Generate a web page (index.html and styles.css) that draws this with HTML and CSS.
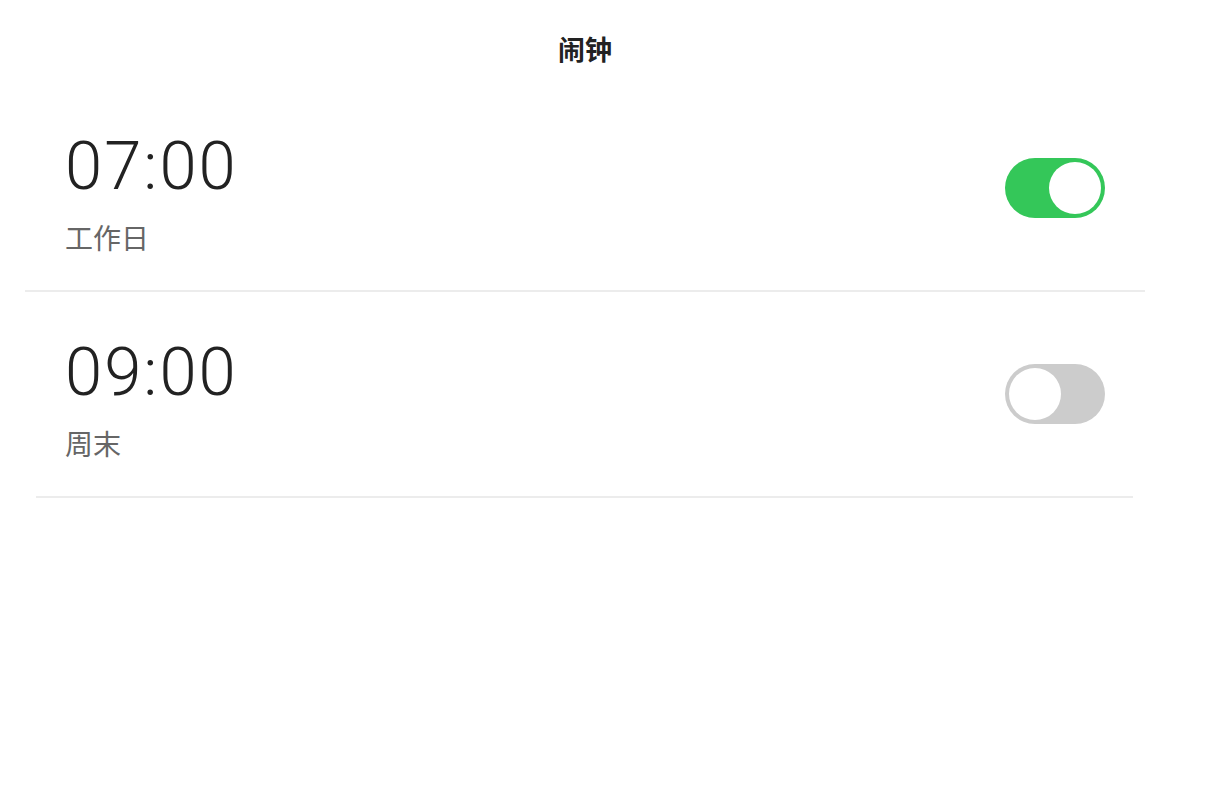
FILE: index.html
```html
<!DOCTYPE html>
<html lang="zh">
<head>
<meta charset="utf-8">
<title>闹钟</title>
<link rel="stylesheet" href="styles.css">
</head>
<body>
<div class="page">
  <header class="header"><h1 class="title">闹钟</h1></header>
  <ul class="alarms">
    <li class="alarm alarm-first">
      <div class="info">
        <div class="time">07:00</div>
        <div class="label">工作日</div>
      </div>
      <span class="switch switch-on"><span class="knob"></span></span>
    </li>
    <li class="alarm alarm-second">
      <div class="info">
        <div class="time">09:00</div>
        <div class="label">周末</div>
      </div>
      <span class="switch switch-off"><span class="knob"></span></span>
    </li>
  </ul>
</div>
</body>
</html>
```

FILE: styles.css
```css
html, body {
  margin: 0;
  padding: 0;
  background: #ffffff;
}
body {
  font-family: "Roboto", "Noto Sans CJK SC", sans-serif;
  color: #222222;
}
.page {
  width: 1170px;
}
.header {
  height: 86px;
  display: flex;
  justify-content: center;
  align-items: flex-start;
  box-sizing: border-box;
  padding-top: 35px;
}
.title {
  margin: 0;
  font-family: "Noto Sans CJK SC", sans-serif;
  font-size: 27px;
  line-height: 28px;
  font-weight: 700;
  color: #222222;
}
.alarms {
  list-style: none;
  margin: 0;
  padding: 0;
}
.alarm {
  display: flex;
  align-items: center;
  justify-content: space-between;
  height: 206px;
  box-sizing: border-box;
  border-bottom: 2px solid #ececec;
}
.alarm-first {
  margin: 0 25px;
  padding: 0 40px 0 40px;
}
.alarm-second {
  margin: 0 37px 0 36px;
  padding: 0 28px 0 29px;
}
.info {
  display: flex;
  flex-direction: column;
  padding-top: 14px;
}
.time {
  font-family: "Roboto", sans-serif;
  font-weight: 300;
  font-size: 67px;
  line-height: 67px;
  letter-spacing: 2px;
  color: #222222;
}
.label {
  margin-top: 17px;
  font-family: "Noto Sans CJK SC", sans-serif;
  font-size: 28px;
  line-height: 40px;
  color: #666666;
}
.switch {
  position: relative;
  display: block;
  width: 100px;
  height: 60px;
  border-radius: 30px;
  flex-shrink: 0;
}
.switch-on {
  background: #34c759;
}
.switch-off {
  background: #cccccc;
}
.knob {
  position: absolute;
  top: 4px;
  width: 52px;
  height: 52px;
  border-radius: 50%;
  background: #ffffff;
}
.switch-on .knob {
  right: 4px;
}
.switch-off .knob {
  left: 4px;
}
```
